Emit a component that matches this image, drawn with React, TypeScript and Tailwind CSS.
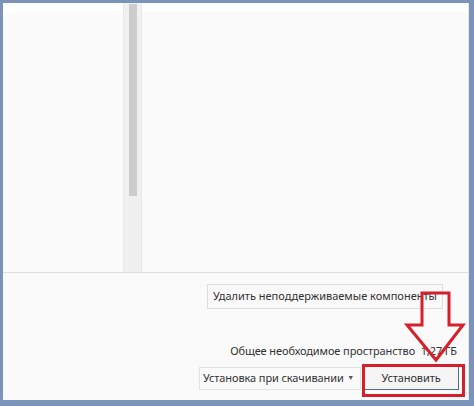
export default function App() {
  return (
    <div className="w-[474px] h-[406px] bg-[#7b93b9] pt-[3px] pl-[3px] pr-[5px] pb-[6px] font-['Noto_Sans',sans-serif] text-[11px] tracking-[-0.1px] text-[#333]">
      <div className="relative h-full w-full bg-[#fafafa] flex flex-col border-r border-[#e6e6e6]">
        {/* top panes */}
        <div className="h-[270px] flex border-b border-[#dedede]">
          <div className="w-[120px] bg-[#fbfbfb] border-t-[9px] border-[#fdfefe]" />
          <div className="w-[19px] bg-[#f0f0f0] border-x border-[#e8e8e8] pt-[1px]">
            <div className="mx-auto w-[8px] h-[192px] bg-[#cdcdcd]" />
          </div>
          <div className="flex-1 bg-[#fafafa] border-t-[9px] border-[#fdfefe]" />
        </div>

        {/* bottom */}
        <div className="flex-1 flex flex-col items-end pr-[9px]">
          <button className="mt-[11px] mr-[16px] h-[25px] w-[236px] whitespace-nowrap bg-[#f9f9f9] border border-[#dcdcdc] tracking-normal">
            Удалить неподдерживаемые компоненты
          </button>
          <div className="mt-[34px] leading-[16px] pr-[2px] whitespace-nowrap">
            Общее необходимое пространство&nbsp;&nbsp;1,27 ГБ
          </div>
          <div className="mt-[7px] flex items-center gap-[2px]">
            <div className="h-[23px] w-[162px] border border-[#e2e2e2] bg-[#fafafa] flex items-center pl-[3px] pr-[6px]">
              <span className="flex-1 whitespace-nowrap">Установка при скачивании</span>
              <span className="text-[7px] text-[#555]">▼</span>
            </div>
            <button className="h-[24px] w-[96px] bg-[#f5f5f5] border border-[#4a7380]">
              Установить
            </button>
          </div>
        </div>

        {/* red annotation: frame around install button */}
        <div className="absolute left-[359px] top-[361px] w-[103px] h-[33px] border-[3px] border-[#d5202b]" />

        {/* red annotation: arrow */}
        <svg className="absolute left-0 top-0" width="466" height="397" viewBox="0 0 466 397" fill="none">
          <polygon
            points="419,290 446,290 446,322 460,322 433,357 404,322 419,322"
            stroke="#d5202b"
            strokeWidth="3"
            strokeLinejoin="miter"
          />
        </svg>
      </div>
    </div>
  );
}
